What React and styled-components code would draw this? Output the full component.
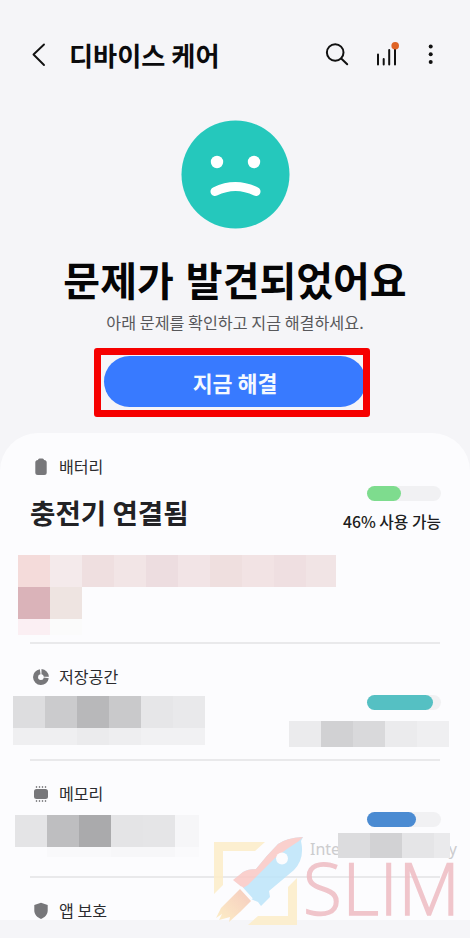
import React from 'react'
import styled, { createGlobalStyle } from 'styled-components'

const GlobalStyle = createGlobalStyle`
  body {
    margin: 0;
    background: #f5f5f8;
    font-family: 'Noto Sans CJK KR', 'Noto Sans', sans-serif;
  }
`

const Screen = styled.main`
  position: relative;
  width: 470px;
  height: 938px;
  overflow: hidden;
`
const Header = styled.header`
  display: flex;
  align-items: center;
  height: 110px;
  box-sizing: border-box;
  padding: 0 30px;
`
const Title = styled.h1`
  flex: 1;
  margin: 0 0 0 22px;
  font-size: 26.2px;
  line-height: 36px;
  font-weight: 700;
  color: #0b0b0d;
  white-space: nowrap;
`
const Actions = styled.div`
  display: flex;
  align-items: center;
  gap: 24px;
  margin-right: 1px;
`
const Icon = styled.svg`
  display: block;
  flex: none;
`

const Hero = styled.section`
  display: flex;
  flex-direction: column;
  align-items: center;
  height: 323px;
  box-sizing: border-box;
  padding-top: 10px;
`
const Heading = styled.h2`
  margin: 25px 0 0;
  font-size: 40px;
  line-height: 50px;
  font-weight: 700;
  word-spacing: 3px;
  color: #050506;
  white-space: nowrap;
`
const Description = styled.p`
  margin: 6px 0 0;
  font-size: 16.2px;
  line-height: 24px;
  color: #58585b;
  white-space: nowrap;
`
const ButtonWrap = styled.div`
  position: relative;
  margin-top: 22px;
`
const FixButton = styled.button`
  display: block;
  width: 262px;
  height: 51px;
  padding: 1px 0 0;
  border: 0;
  border-radius: 26px;
  background: #387aff;
  color: #f4f9ff;
  font-family: inherit;
  font-size: 21.7px;
  font-weight: 700;
`
const Highlight = styled.div`
  position: absolute;
  top: -8px;
  left: -10px;
  width: 276px;
  height: 69px;
  box-sizing: border-box;
  border: 7px solid #f60000;
  border-radius: 3px;
`

const Card = styled.section`
  height: 487px;
  overflow: hidden;
  border-radius: 38px 38px 0 0;
  background: #fcfcfe;
`
const Item = styled.article`
  height: ${p => p.$height}px;
  box-sizing: border-box;
  margin: 0 30px;
  padding-top: ${p => p.$top}px;
  border-bottom: 2px solid #e9e9eb;
`
const Label = styled.div`
  display: flex;
  align-items: center;
  gap: 10px;
  height: 18px;
  padding: 0 0 2px 3px;
`
const LabelText = styled.span`
  margin-top: -2px;
  font-size: 16.1px;
  line-height: 16px;
  color: #2b2b2e;
`
const Columns = styled.div`
  display: flex;
  justify-content: space-between;
  align-items: flex-start;
`
const Status = styled.h3`
  margin: 16px 0 0;
  font-size: 27.6px;
  line-height: 36px;
  font-weight: 700;
  color: #222225;
  white-space: nowrap;
`
const Usage = styled.div`
  display: flex;
  flex-direction: column;
  align-items: flex-end;
  margin-right: -1px;
  padding-top: ${p => p.$top}px;
`
const Track = styled.div`
  width: 74px;
  height: 15px;
  border-radius: 8px;
  background: #f1f1f3;
`
const Fill = styled.div`
  width: ${p => p.$width}px;
  height: 15px;
  border-radius: 8px;
  background: ${p => p.$color};
`
const UsageText = styled.div`
  margin-top: 10px;
  font-size: 15.8px;
  line-height: 22px;
  font-weight: 500;
  color: #1d1d20;
  white-space: nowrap;
`
const MosaicGrid = styled.div`
  position: relative;
  z-index: 2;
  margin: ${p => p.$margin};
`
const MosaicRow = styled.div`
  display: flex;
  height: ${p => p.$height}px;
`
const Cell = styled.div`
  width: ${p => p.$width}px;
  background: ${p => p.$color};
`

// sits on top of the card and the page edge
const Brand = styled.div`
  position: absolute;
  z-index: 1;
  left: 212px;
  top: 834px;
  display: flex;
  width: 250px;
  opacity: 0.85;
`
const BrandText = styled.div`
  margin: 6px 0 0 4px;
  font-family: 'Open Sans', 'Noto Sans', sans-serif;
`
const Tagline = styled.div`
  display: flex;
  justify-content: space-between;
  width: 147px;
  margin-left: 2px;
  font-family: 'Noto Sans', sans-serif;
  font-size: 16px;
  line-height: 18px;
  color: #c4c4c6;
`
const BrandName = styled.div`
  margin: 5px 0 0 -5px;
  font-size: 71px;
  line-height: 50px;
  font-weight: 300;
  letter-spacing: 0.8px;
  color: #efbcc3;
  -webkit-text-stroke: 1.4px #efbcc3;
`

const batteryMosaic = [
  {
    height: 32,
    cells: [
      '#f4dbda', '#f4eaeb', '#efdfe0', '#f2e5e6', '#eddde0',
      '#f2e4e6', '#efdfdf', '#f2e3e4', '#efdfe1', ['#f1e4e5', 30],
    ],
  },
  { height: 32, cells: ['#dab3b9', '#eee4e1'] },
  { height: 16, cells: ['#fbeff3', '#fbfbfb'] },
]
const storageMosaic = [
  { height: 32, cells: ['#dddddf', '#cbcbcd', '#b8b8ba', '#c9c9cb', '#e6e6e8', '#e9e9eb'] },
  { height: 17, cells: ['#efeff1', '#efeff1', '#ebebed', '#eeeef0', '#f1f1f3', '#f1f1f3'] },
]
const storageUsageMosaic = [
  { height: 26, cells: ['#ebebed', '#d1d1d3', '#d9d9db', '#ebebed', '#efeff1'] },
]
const memoryMosaic = [
  { height: 32, cells: ['#e4e4e6', '#bebec0', '#aaaaac', '#e4e4e6', '#e5e5e7', ['#f6f6f8', 24]] },
  { height: 10, cells: ['#fcfcfe', '#f9f9fb', '#f9f9fb', '#f7f7f9', '#f7f7f9', ['#fafafc', 24]] },
]
const memoryUsageMosaic = [
  { height: 25, cells: ['#dcdcde', '#d2d2d4', '#e5e5e7', ['#eaeaec', 16]] },
]

const Mosaic = ({ rows, margin }) => (
  <MosaicGrid $margin={margin}>
    {rows.map((row, i) => (
      <MosaicRow key={i} $height={row.height}>
        {row.cells.map((cell, j) => {
          const [color, width] = Array.isArray(cell) ? cell : [cell, 32]
          return <Cell key={j} $color={color} $width={width} />
        })}
      </MosaicRow>
    ))}
  </MosaicGrid>
)

const BackIcon = () => (
  <Icon width="17" height="26" viewBox="0 0 17 26">
    <path d="M14 2.500L3.500 12.500L14 23" fill="none" stroke="#111" strokeWidth="1.900" strokeLinecap="round" strokeLinejoin="round" />
  </Icon>
)

const SearchIcon = () => (
  <Icon width="24" height="24" viewBox="0 0 24 24" fill="none" stroke="#111" strokeWidth="2" strokeLinecap="round">
    <circle cx="10.200" cy="9.500" r="8.300" />
    <path d="M16.200 15.500L22.200 21.300" />
  </Icon>
)

const SignalIcon = () => (
  <Icon width="26" height="26" viewBox="0 0 26 26">
    <path d="M5 12.500V22.500M10.700 17V22.500M16.200 8V22.500M22 6V22.500" fill="none" stroke="#111" strokeWidth="2" strokeLinecap="round" />
    <circle cx="22.200" cy="3.800" r="3.800" fill="#df6426" />
  </Icon>
)

const MoreIcon = () => (
  <Icon width="16" height="24" viewBox="0 0 16 24" fill="#111">
    <circle cx="7.700" cy="3.500" r="2" />
    <circle cx="7.700" cy="11.200" r="2" />
    <circle cx="7.700" cy="18.900" r="2" />
  </Icon>
)

const SadFace = () => (
  <Icon width="109" height="109" viewBox="0 0 109 109">
    <circle cx="54.500" cy="54.500" r="54" fill="#25c8bc" />
    <circle cx="36" cy="42" r="6.200" fill="#fff" />
    <circle cx="73" cy="42" r="6.200" fill="#fff" />
    <path d="M34 71.500Q54.500 61.500 75 71.500" fill="none" stroke="#fff" strokeWidth="9" strokeLinecap="round" />
  </Icon>
)

const BatteryIcon = () => (
  <Icon width="16" height="18" viewBox="0 0 16 18">
    <path d="M5 2Q5 .5 6.500 .5H9.500Q11 .5 11 2Q13.700 2 13.700 4.500V14.500Q13.700 17 11.200 17H4.800Q2.300 17 2.300 14.500V4.500Q2.300 2 5 2Z" fill="#77777a" />
  </Icon>
)

const StorageIcon = () => (
  <Icon width="16" height="16" viewBox="0 0 16 16">
    <path d="M7.200 2.700A5.400 5.400 0 1 0 13.300 8.800" fill="none" stroke="#77777a" strokeWidth="5" />
    <path d="M8.500 .1A8 8 0 0 1 15.900 7.700H10.800A3 3 0 0 0 8.500 5.200Z" fill="#77777a" />
  </Icon>
)

const MemoryIcon = () => (
  <Icon width="16" height="18" viewBox="0 0 16 18">
    <rect x="1" y="4" width="14" height="10" rx="2.500" fill="#77777a" />
    <path d="M3.500 1V3M6.500 1V3M9.500 1V3M12.500 1V3M3.500 15V17M6.500 15V17M9.500 15V17M12.500 15V17" stroke="#8c8c8e" strokeWidth="1.300" />
  </Icon>
)

const ShieldIcon = () => (
  <Icon width="16" height="18" viewBox="0 0 16 18">
    <path d="M8 .8L14.700 3V8.500C14.700 12.600 11.800 15.300 8 17C4.200 15.300 1.300 12.600 1.300 8.500V3Z" fill="#77777a" />
  </Icon>
)

const Rocket = () => (
  <Icon width="92" height="94" viewBox="0 0 92 94">
    <defs>
      <linearGradient id="flame" x1="1" y1="0" x2="0" y2="1">
        <stop offset="0" stopColor="#f5c3b5" />
        <stop offset="1" stopColor="#fdedbd" />
      </linearGradient>
    </defs>
    <path d="M2 8H53L43 17H11V51L2 60Z" fill="#fdedc8" />
    <path d="M85 44V91H36L46 82H76V53Z" fill="#fdedc8" />
    <path d="M28 55L39 67L28 78L17 88L18 83L7 86L10 80L4 84L9 74Z" fill="url(#flame)" />
    <path d="M31 54L22 46L31 38Q36 35 44 35Q55 21 66 10Q74 4 91 3L89 7Q93 25 82 36L57 57L58 63L49 72L46 68L39 65Z" fill="#bde5fa" />
    <path d="M31 54L21 46L31 38Q36 35 44 35Q55 21 66 10Q74 4 91 3L87 7Q74 15 63 24L36 51Z" fill="#fac9c5" />
    <circle cx="70" cy="24.500" r="6" fill="#fcfcfe" />
    <path d="M29 53L40 65" stroke="#fcfcfe" strokeWidth="2" />
  </Icon>
)

const Gauge = ({ width, color }) => (
  <Track>
    <Fill $width={width} $color={color} />
  </Track>
)

const App = () => (
  <Screen>
    <GlobalStyle />
    <Header>
      <BackIcon />
      <Title>디바이스 케어</Title>
      <Actions>
        <SearchIcon />
        <SignalIcon />
        <MoreIcon />
      </Actions>
    </Header>
    <Hero>
      <SadFace />
      <Heading>문제가 발견되었어요</Heading>
      <Description>아래 문제를 확인하고 지금 해결하세요.</Description>
      <ButtonWrap>
        <FixButton>지금 해결</FixButton>
        <Highlight />
      </ButtonWrap>
    </Hero>
    <Card>
      <Item $height={211} $top={25}>
        <Label><BatteryIcon /><LabelText>배터리</LabelText></Label>
        <Columns>
          <Status>충전기 연결됨</Status>
          <Usage $top={8}>
            <Gauge width={34} color="#7edc8e" />
            <UsageText>46% 사용 가능</UsageText>
          </Usage>
        </Columns>
        <Mosaic rows={batteryMosaic} margin="22px 0 0 -12px" />
      </Item>
      <Item $height={117} $top={24}>
        <Label><StorageIcon /><LabelText>저장공간</LabelText></Label>
        <Columns>
          <Mosaic rows={storageMosaic} margin="8px 0 0 -17px" />
          <Usage $top={7}>
            <Gauge width={66} color="#55c0c3" />
            <Mosaic rows={storageUsageMosaic} margin="11px -8px 0 0" />
          </Usage>
        </Columns>
      </Item>
      <Item $height={117} $top={24}>
        <Label><MemoryIcon /><LabelText>메모리</LabelText></Label>
        <Columns>
          <Mosaic rows={memoryMosaic} margin="10px 0 0 -15px" />
          <Usage $top={7}>
            <Gauge width={49} color="#4b8bd2" />
            <Mosaic rows={memoryUsageMosaic} margin="6px -9px 0 0" />
          </Usage>
        </Columns>
      </Item>
      <Item $height={60} $top={24}>
        <Label><ShieldIcon /><LabelText>앱 보호</LabelText></Label>
      </Item>
    </Card>
    <Brand>
      <Rocket />
      <BrandText>
        <Tagline><span>Inte</span><span>y</span></Tagline>
        <BrandName>SLIM</BrandName>
      </BrandText>
    </Brand>
  </Screen>
)

export default App
